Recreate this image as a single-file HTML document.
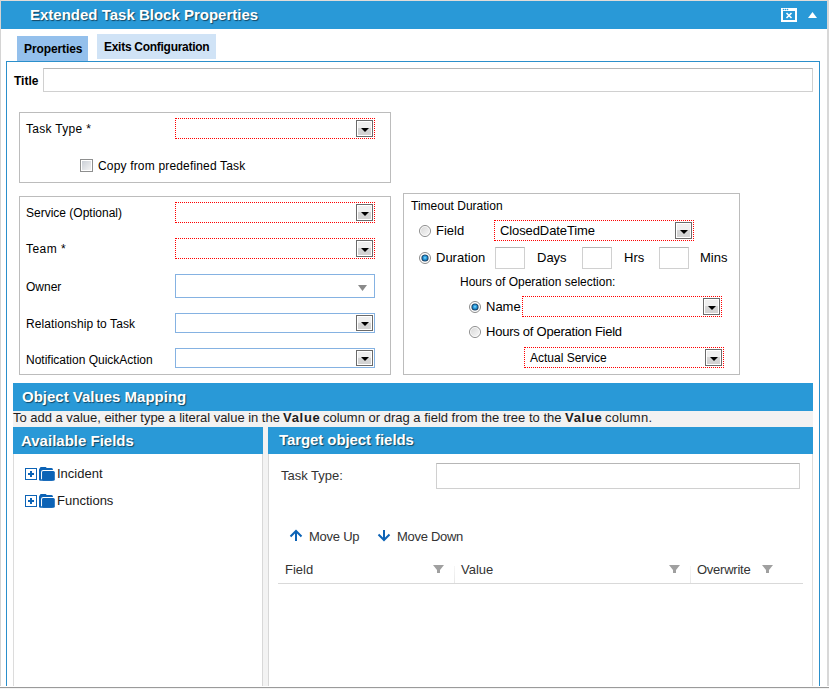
<!DOCTYPE html>
<html><head><meta charset="utf-8">
<style>
html,body{margin:0;padding:0;background:#fff;}
body{width:829px;height:689px;position:relative;overflow:hidden;font-family:"Liberation Sans",sans-serif;color:#000;}
.a{position:absolute;box-sizing:border-box;}
.t{position:absolute;white-space:pre;}
.s12{font-size:12px;line-height:14px;}
.s13{font-size:13px;line-height:15px;}
.s15{font-size:15px;line-height:17px;font-weight:bold;}
.hd{color:#fff;text-shadow:1px 1px 1px rgba(0,0,0,0.55);}
.fs{border:1px solid #bcbcbc;}
.dd{border:1px dotted #ff0000;background:#fff;}
.bd{border:1px solid #85b2e2;background:#fff;}
.btn{position:absolute;width:17px;height:17px;box-sizing:border-box;border:1px solid #6a6a6a;background:#fff;}
.btn i{position:absolute;left:1px;top:1px;right:1px;bottom:1px;background:linear-gradient(#efefef 0,#efefef 45%,#d6d6d6 50%,#d2d2d2 100%);}
.btn b{position:absolute;left:4px;top:7px;width:0;height:0;border-left:4px solid transparent;border-right:4px solid transparent;border-top:4px solid #000;}
.inp{border:1px solid #d0d0d0;border-top-color:#b6b6b6;background:#fff;}
.rad{position:absolute;width:13px;height:13px;}
</style></head><body>

<!-- page frame -->
<div class="a" style="left:0;top:0;width:829px;height:1px;background:#e2dcd8"></div>
<div class="a" style="left:0;top:0;width:1px;height:686px;background:#d4d4d4"></div>
<div class="a" style="left:827px;top:0;width:2px;height:686px;background:#d8d8d8"></div>
<div class="a" style="left:0;top:687px;width:829px;height:1px;background:#9a9a9a"></div>
<div class="a" style="left:0;top:688px;width:829px;height:1px;background:#f3f3f3"></div>

<!-- header -->
<div class="a" style="left:1px;top:1px;width:826px;height:28px;background:#2999d7"></div>
<div class="t s15 hd" style="left:30px;top:6px;">Extended Task Block Properties</div>
<svg class="a" style="left:781px;top:8px" width="16" height="14" viewBox="0 0 16 14">
  <rect x="0" y="0" width="16" height="14" fill="#fff"/>
  <rect x="2" y="3" width="12" height="9" fill="#2999d7"/>
  <circle cx="2.5" cy="1.5" r="0.8" fill="#2999d7"/>
  <circle cx="4.5" cy="1.5" r="0.8" fill="#2999d7"/>
  <circle cx="6.5" cy="1.5" r="0.8" fill="#2999d7"/>
  <path d="M5.5 5 L10.5 10 M10.5 5 L5.5 10" stroke="#fff" stroke-width="1.6"/>
</svg>
<svg class="a" style="left:808px;top:12px" width="9" height="6" viewBox="0 0 9 6">
  <path d="M0 6 L4.5 0 L9 6 Z" fill="#fff"/>
</svg>

<!-- tabs -->
<div class="a" style="left:17px;top:36px;width:71px;height:25px;background:#94c0ec"></div>
<div class="t s12" style="left:24px;top:42px;font-weight:bold;color:#000;letter-spacing:-0.1px">Properties</div>
<div class="a" style="left:97px;top:34px;width:119px;height:25px;background:#d0e3f6"></div>
<div class="t s12" style="left:104px;top:40px;font-weight:bold;color:#000;letter-spacing:-0.28px">Exits Configuration</div>

<!-- main panel -->
<div class="a" style="left:6px;top:61px;width:814px;height:625px;border:1px solid #2b8fcb;border-bottom:none"></div>

<!-- title -->
<div class="t s12" style="left:14px;top:74px;font-weight:bold;color:#000">Title</div>
<div class="a inp" style="left:43px;top:68px;width:770px;height:24px"></div>

<!-- fieldset 1 -->
<div class="a fs" style="left:19px;top:112px;width:372px;height:71px"></div>
<div class="t s12" style="left:26px;top:122px;letter-spacing:0.3px">Task Type *</div>
<div class="a dd" style="left:175px;top:118px;width:200px;height:21px"></div>
<div class="btn" style="left:356px;top:120px"><i></i><b></b></div>
<div class="a" style="left:80px;top:159px;width:13px;height:13px;border:1px solid #8e8f8f;background:linear-gradient(135deg,#c6cbd3,#f7f7f7);box-shadow:inset 0 0 0 1px #fff"></div>
<div class="t s12" style="left:98px;top:159px;letter-spacing:0.17px">Copy from predefined Task</div>

<!-- fieldset 2 -->
<div class="a fs" style="left:19px;top:196px;width:372px;height:179px"></div>
<div class="t s12" style="left:26px;top:206px">Service (Optional)</div>
<div class="a dd" style="left:175px;top:202px;width:200px;height:21px"></div>
<div class="btn" style="left:356px;top:204px"><i></i><b></b></div>
<div class="t s12" style="left:26px;top:242px;letter-spacing:0.45px">Team *</div>
<div class="a dd" style="left:175px;top:238px;width:200px;height:21px"></div>
<div class="btn" style="left:356px;top:240px"><i></i><b></b></div>
<div class="t s12" style="left:26px;top:280px">Owner</div>
<div class="a bd" style="left:175px;top:274px;width:200px;height:24px"></div>
<svg class="a" style="left:358px;top:285px" width="9" height="6" viewBox="0 0 9 6"><path d="M0 0 L9 0 L4.5 6 Z" fill="#8a8a8a"/></svg>
<div class="t s12" style="left:26px;top:317px;letter-spacing:0.1px">Relationship to Task</div>
<div class="a bd" style="left:175px;top:313px;width:200px;height:20px"></div>
<div class="btn" style="left:356px;top:315px;height:16px"><i></i><b style="top:6px"></b></div>
<div class="t s12" style="left:26px;top:353px">Notification QuickAction</div>
<div class="a bd" style="left:175px;top:348px;width:200px;height:20px"></div>
<div class="btn" style="left:356px;top:350px;height:16px"><i></i><b style="top:6px"></b></div>

<!-- fieldset 3 -->
<svg width="0" height="0" style="position:absolute"><defs>
<linearGradient id="rg" x1="0" y1="0" x2="1" y2="1"><stop offset="0" stop-color="#d4d4d4"/><stop offset="1" stop-color="#fbfbfb"/></linearGradient>
<radialGradient id="bg" cx="0.5" cy="0.45" r="0.55"><stop offset="0" stop-color="#8ee0ff"/><stop offset="0.5" stop-color="#2a9ee0"/><stop offset="1" stop-color="#1670b0"/></radialGradient>
</defs></svg>
<svg class="rad" style="left:419px;top:225px" width="13" height="13" viewBox="0 0 13 13"><circle cx="6" cy="6" r="5.5" fill="url(#rg)" stroke="#8c8c8c"/><circle cx="6" cy="6" r="4.5" fill="none" stroke="#fff" stroke-opacity="0.7"/></svg>
<svg class="rad" style="left:419px;top:252px" width="13" height="13" viewBox="0 0 13 13"><circle cx="6" cy="6" r="5.5" fill="#fff" stroke="#8c8c8c"/><circle cx="6" cy="6" r="3.6" fill="#1a3a58"/><circle cx="6" cy="6" r="2.7" fill="url(#bg)"/></svg>
<svg class="rad" style="left:469px;top:301px" width="13" height="13" viewBox="0 0 13 13"><circle cx="6" cy="6" r="5.5" fill="#fff" stroke="#8c8c8c"/><circle cx="6" cy="6" r="3.6" fill="#1a3a58"/><circle cx="6" cy="6" r="2.7" fill="url(#bg)"/></svg>
<svg class="rad" style="left:469px;top:326px" width="13" height="13" viewBox="0 0 13 13"><circle cx="6" cy="6" r="5.5" fill="url(#rg)" stroke="#8c8c8c"/><circle cx="6" cy="6" r="4.5" fill="none" stroke="#fff" stroke-opacity="0.7"/></svg>
<div class="a fs" style="left:403px;top:193px;width:337px;height:182px"></div>
<div class="t s12" style="left:411px;top:199px">Timeout Duration</div>
<div class="t s13" style="left:436px;top:223px">Field</div>
<div class="a dd" style="left:494px;top:220px;width:200px;height:21px"></div>
<div class="t s13" style="left:500px;top:223px;letter-spacing:-0.1px">ClosedDateTime</div>
<div class="btn" style="left:675px;top:222px"><i></i><b></b></div>
<div class="t s13" style="left:436px;top:250px">Duration</div>
<div class="a inp" style="left:495px;top:247px;width:30px;height:22px"></div>
<div class="t s13" style="left:537px;top:250px">Days</div>
<div class="a inp" style="left:582px;top:247px;width:30px;height:22px"></div>
<div class="t s13" style="left:624px;top:250px">Hrs</div>
<div class="a inp" style="left:659px;top:247px;width:30px;height:22px"></div>
<div class="t s13" style="left:700px;top:250px">Mins</div>
<div class="t s12" style="left:460px;top:275px">Hours of Operation selection:</div>
<div class="t s13" style="left:486px;top:299px">Name</div>
<div class="a dd" style="left:522px;top:296px;width:200px;height:21px"></div>
<div class="btn" style="left:703px;top:298px"><i></i><b></b></div>
<div class="t s13" style="left:486px;top:324px;letter-spacing:-0.24px">Hours of Operation Field</div>
<div class="a dd" style="left:524px;top:347px;width:200px;height:21px"></div>
<div class="t s12" style="left:530px;top:351px">Actual Service</div>
<div class="btn" style="left:705px;top:349px"><i></i><b></b></div>

<!-- object values mapping -->
<div class="a" style="left:13px;top:383px;width:800px;height:28px;background:#2999d7"></div>
<div class="t s15 hd" style="left:22px;top:388px">Object Values Mapping</div>
<div class="a" style="left:13px;top:411px;width:800px;height:16px;background:#f2f2f2"></div>
<div class="t s13" style="left:13px;top:410px;color:#1e1e1e;letter-spacing:-0.025px">To add a value, either type a literal value in the</div>
<div class="t s13" style="left:283px;top:410px;color:#1e1e1e;font-weight:bold;letter-spacing:0.7px">Value</div>
<div class="t s13" style="left:323px;top:410px;color:#1e1e1e">column or drag a field from the tree to the</div>
<div class="t s13" style="left:565px;top:410px;color:#1e1e1e;font-weight:bold;letter-spacing:0.7px">Value</div>
<div class="t s13" style="left:605px;top:410px;color:#1e1e1e;letter-spacing:0.25px">column.</div>

<div class="a" style="left:13px;top:427px;width:250px;height:27px;background:#2999d7"></div>
<div class="t s15 hd" style="left:21px;top:432px">Available Fields</div>
<div class="a" style="left:268px;top:427px;width:545px;height:27px;background:#2999d7"></div>
<div class="a" style="left:263px;top:427px;width:5px;height:27px;background:#f2f2f2"></div>
<div class="t s15 hd" style="left:279px;top:431px;letter-spacing:-0.08px">Target object fields</div>

<div class="a" style="left:13px;top:454px;width:1px;height:232px;background:#dcdcdc"></div>
<div class="a" style="left:262px;top:454px;width:7px;height:232px;background:#f3f3f3;border-left:1px solid #d8d8d8;border-right:1px solid #d8d8d8"></div>
<div class="a" style="left:812px;top:454px;width:1px;height:232px;background:#dcdcdc"></div>

<!-- tree -->
<svg class="a" style="left:25px;top:467px" width="31" height="15" viewBox="0 0 31 15">
  <rect x="0.5" y="1.5" width="11" height="11" fill="#fff" stroke="#0c63b6" stroke-width="1"/>
  <path d="M3 7 H9 M6 4 V10" stroke="#0c63b6" stroke-width="2"/>
  <rect x="15" y="0" width="6.5" height="2.5" rx="1" fill="#0c63b6"/>
  <rect x="14" y="1" width="14" height="12.8" rx="1.5" fill="#0c63b6"/>
  <path d="M16.6 12.2 V5.2 Q16.6 3.6 18.2 3.6 H29.5" stroke="#fff" stroke-width="1.1" fill="none"/>
  <rect x="17.2" y="4" width="12.6" height="9.8" rx="1.5" fill="#0c63b6"/>
</svg>
<div class="t s13" style="left:57px;top:466px;color:#1a1a1a">Incident</div>
<svg class="a" style="left:25px;top:494px" width="31" height="15" viewBox="0 0 31 15">
  <rect x="0.5" y="1.5" width="11" height="11" fill="#fff" stroke="#0c63b6" stroke-width="1"/>
  <path d="M3 7 H9 M6 4 V10" stroke="#0c63b6" stroke-width="2"/>
  <rect x="15" y="0" width="6.5" height="2.5" rx="1" fill="#0c63b6"/>
  <rect x="14" y="1" width="14" height="12.8" rx="1.5" fill="#0c63b6"/>
  <path d="M16.6 12.2 V5.2 Q16.6 3.6 18.2 3.6 H29.5" stroke="#fff" stroke-width="1.1" fill="none"/>
  <rect x="17.2" y="4" width="12.6" height="9.8" rx="1.5" fill="#0c63b6"/>
</svg>
<div class="t s13" style="left:57px;top:493px;color:#1a1a1a">Functions</div>

<!-- target fields -->
<div class="t s13" style="left:281px;top:468px;color:#333">Task Type:</div>
<div class="a inp" style="left:436px;top:463px;width:364px;height:26px"></div>

<svg class="a" style="left:289px;top:529px" width="14" height="13" viewBox="0 0 14 13">
  <path d="M7 12 V2.5 M1.5 7.5 L7 2 L12.5 7.5" stroke="#0c63b6" stroke-width="2" fill="none"/>
</svg>
<div class="t s13" style="left:309px;top:529px;color:#333;letter-spacing:-0.25px">Move Up</div>
<svg class="a" style="left:377px;top:529px" width="14" height="13" viewBox="0 0 14 13">
  <path d="M7 1 V11 M1.5 5.5 L7 11 L12.5 5.5" stroke="#0c63b6" stroke-width="2" fill="none"/>
</svg>
<div class="t s13" style="left:397px;top:529px;color:#333;letter-spacing:-0.3px">Move Down</div>

<div class="t s13" style="left:285px;top:562px;color:#333">Field</div>
<svg class="a" style="left:433px;top:565px" width="11" height="8" viewBox="0 0 11 8"><path d="M0 0 H11 L7 5 V8 H4 V5 Z" fill="#a0a0a0"/></svg>
<div class="a" style="left:454px;top:566px;width:1px;height:17px;background:linear-gradient(#f6f6f6,#e8e8e8)"></div>
<div class="t s13" style="left:461px;top:562px;color:#333">Value</div>
<svg class="a" style="left:669px;top:565px" width="11" height="8" viewBox="0 0 11 8"><path d="M0 0 H11 L7 5 V8 H4 V5 Z" fill="#a0a0a0"/></svg>
<div class="a" style="left:690px;top:566px;width:1px;height:17px;background:linear-gradient(#f6f6f6,#e8e8e8)"></div>
<div class="t s13" style="left:697px;top:562px;color:#333;letter-spacing:-0.25px">Overwrite</div>
<svg class="a" style="left:762px;top:565px" width="11" height="8" viewBox="0 0 11 8"><path d="M0 0 H11 L7 5 V8 H4 V5 Z" fill="#a0a0a0"/></svg>
<div class="a" style="left:278px;top:583px;width:525px;height:1px;background:#d9d9d9"></div>

</body></html>
